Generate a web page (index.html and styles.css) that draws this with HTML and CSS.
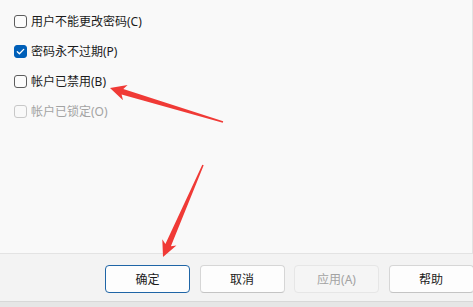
FILE: index.html
```html
<!DOCTYPE html>
<html lang="zh-CN">
<head>
    <meta charset="UTF-8">
    <title>帐户属性</title>
    <link rel="stylesheet" href="styles.css">
</head>
<body>
    <div class="panel">
        <ul class="options">
            <li class="option"><span class="box"></span>用户不能更改密码(C)</li>
            <li class="option"><span class="box checked">
                <svg viewBox="0 0 13 13" width="13" height="13"><path d="M3.3 6.8 L5.4 8.8 L9.7 4.4" fill="none" stroke="#fff" stroke-width="1.3" stroke-linecap="round" stroke-linejoin="round"/></svg>
            </span>密码永不过期(P)</li>
            <li class="option"><span class="box"></span>帐户已禁用(B)</li>
            <li class="option disabled"><span class="box"></span>帐户已锁定(O)</li>
        </ul>
    </div>
    <div class="footer">
        <button class="btn default">确定</button>
        <button class="btn">取消</button>
        <button class="btn" disabled>应用(A)</button>
        <button class="btn">帮助</button>
    </div>
    <div class="strip"></div>

    <!-- red annotation arrows drawn over the dialog -->
    <svg class="arrows" viewBox="0 0 473 307" width="473" height="307">
        <polygon fill="#f03a36" points="110,88 127.6,84.9 123.3,88.9 223.2,121.2 222.8,122.8 121.6,94.6 123,100.3"/>
        <polygon fill="#f03a36" points="163,257 176.4,245.4 170.9,246.3 203.7,165.3 202.3,164.7 165.4,243.9 162.3,239.3"/>
    </svg>
</body>
</html>
```

FILE: styles.css
```css
body {
    margin: 0;
    width: 473px;
    height: 307px;
    overflow: hidden;
    position: relative;
    font-family: "Noto Sans", "Noto Sans CJK SC", sans-serif;
    font-size: 12px;
    color: #1b1b1b;
    background-color: #f3f3f3;
}
.panel {
    height: 253px;
    background-color: #f9f9f9;
    border-right: 1px solid #e3e3e3;
    border-bottom: 1px solid #e3e3e3;
}
.options {
    list-style: none;
    margin: 0;
    padding: 6px 14px;
}
.option {
    height: 30px;
    display: flex;
    align-items: center;
    gap: 4px;
}
.box {
    width: 13px;
    height: 13px;
    box-sizing: border-box;
    border: 1px solid #5d5d5d;
    border-radius: 3px;
    background-color: #fcfcfc;
    display: flex;
}
.box.checked {
    background-color: #005fb8;
    border-color: #005fb8;
}
.box svg {
    margin: -1px;
}
.disabled {
    color: #a3a3a3;
}
.disabled .box {
    border-color: #c8c8c8;
    background-color: #f9f9f9;
}
.footer {
    height: 47px;
    box-sizing: border-box;
    padding: 11px 0 0 105px;
    display: flex;
    align-items: flex-start;
    gap: 9.5px;
}
.btn {
    flex: none;
    width: 85px;
    height: 28px;
    font-family: inherit;
    font-size: 12px;
    color: #1b1b1b;
    background-color: #fdfdfd;
    border: 1px solid #d6d6d6;
    border-bottom-color: #c4c4c4;
    border-radius: 4px;
    padding: 0;
}
.btn.default {
    border: 1px solid #1f65a6;
}
.btn:disabled {
    color: #a3a3a3;
    background-color: #f5f5f5;
    border-color: #e6e6e6;
}
.strip {
    height: 5px;
    border-top: 1px solid #d8d8d8;
    background-color: #e6e6e6;
}
.arrows {
    position: absolute;
    left: 0;
    top: 0;
    pointer-events: none;
}
```
